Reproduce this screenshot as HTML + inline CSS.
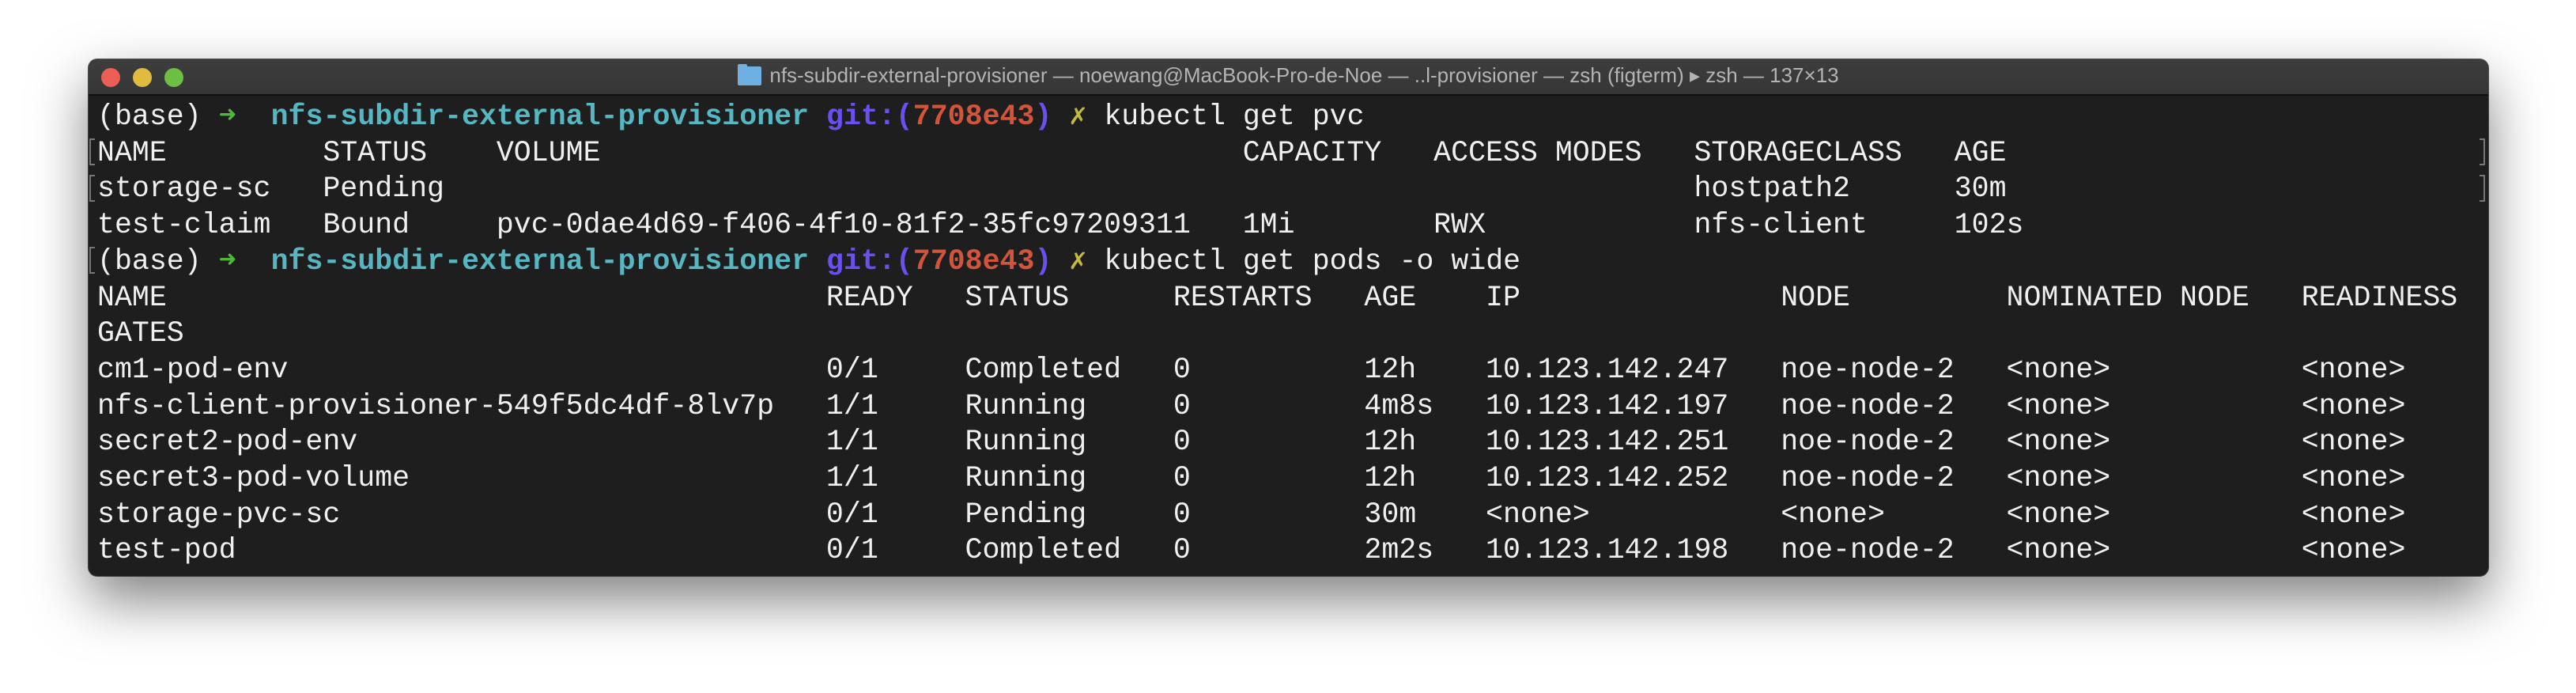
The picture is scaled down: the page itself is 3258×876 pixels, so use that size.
<!DOCTYPE html>
<html><head><meta charset="utf-8"><style>
html,body{margin:0;padding:0;background:#fff;width:3258px;height:876px;overflow:hidden}
.win{position:absolute;left:112px;top:75px;width:3035px;height:653px;background:#1e1e1e;border-radius:11px;box-shadow:0 30px 70px rgba(0,0,0,.5),0 0 0 1px #555;overflow:hidden}
.tb{position:absolute;left:0;top:0;right:0;height:44px;background:linear-gradient(#3d3d3d,#363636);border-bottom:2px solid #111}
.dot{position:absolute;top:11px;width:24px;height:24px;border-radius:50%}
.title{position:absolute;left:0;right:0;top:5px;text-align:center;font:26px "Liberation Sans",sans-serif;color:#b4b4b4;white-space:nowrap}
.fold{display:inline-block;width:30px;height:24px;background:#6fb0e2;border-radius:2px;vertical-align:-4px;margin-right:10px;position:relative}
.fold:before{content:"";position:absolute;left:0;top:-3px;width:12px;height:5px;background:#6fb0e2;border-radius:2px 2px 0 0}
pre{position:absolute;left:11px;top:50px;margin:0;font:36.6px/45.7px "Liberation Mono",monospace;color:#f0f0f0}
.g{color:#4fb83a;font-weight:bold}.c{color:#56b6c2;font-weight:bold}.p{color:#6a50f0;font-weight:bold}.r{color:#d2543b;font-weight:bold}.y{color:#c4b93f;font-weight:bold}
.br{position:absolute;width:5px;height:30px;border:2px solid #777}
.bl{left:1px;border-right:none}.brr{left:3024px;border-left:none}
</style></head><body>
<div class="win">
<div class="tb">
<div class="dot" style="left:16px;background:#ec5f57"></div>
<div class="dot" style="left:56px;background:#e0bb3f"></div>
<div class="dot" style="left:96px;background:#6cbf42"></div>
<div class="title"><span class="fold"></span>nfs-subdir-external-provisioner — noewang@MacBook-Pro-de-Noe — ..l-provisioner — zsh (figterm) ▸ zsh — 137×13</div>
</div>
<div class="br bl" style="top:100px"></div><div class="br bl" style="top:146px"></div><div class="br bl" style="top:237px"></div>
<div class="br brr" style="top:100px"></div><div class="br brr" style="top:146px"></div>
<pre>(base) <span class="g">➜</span>  <span class="c">nfs-subdir-external-provisioner</span> <span class="p">git:(</span><span class="r">7708e43</span><span class="p">)</span> <span class="y">✗</span> kubectl get pvc
NAME         STATUS    VOLUME                                     CAPACITY   ACCESS MODES   STORAGECLASS   AGE
storage-sc   Pending                                                                        hostpath2      30m
test-claim   Bound     pvc-0dae4d69-f406-4f10-81f2-35fc97209311   1Mi        RWX            nfs-client     102s
(base) <span class="g">➜</span>  <span class="c">nfs-subdir-external-provisioner</span> <span class="p">git:(</span><span class="r">7708e43</span><span class="p">)</span> <span class="y">✗</span> kubectl get pods -o wide
NAME                                      READY   STATUS      RESTARTS   AGE    IP               NODE         NOMINATED NODE   READINESS
GATES
cm1-pod-env                               0/1     Completed   0          12h    10.123.142.247   noe-node-2   &lt;none&gt;           &lt;none&gt;
nfs-client-provisioner-549f5dc4df-8lv7p   1/1     Running     0          4m8s   10.123.142.197   noe-node-2   &lt;none&gt;           &lt;none&gt;
secret2-pod-env                           1/1     Running     0          12h    10.123.142.251   noe-node-2   &lt;none&gt;           &lt;none&gt;
secret3-pod-volume                        1/1     Running     0          12h    10.123.142.252   noe-node-2   &lt;none&gt;           &lt;none&gt;
storage-pvc-sc                            0/1     Pending     0          30m    &lt;none&gt;           &lt;none&gt;       &lt;none&gt;           &lt;none&gt;
test-pod                                  0/1     Completed   0          2m2s   10.123.142.198   noe-node-2   &lt;none&gt;           &lt;none&gt;</pre>
</div>
</body></html>
